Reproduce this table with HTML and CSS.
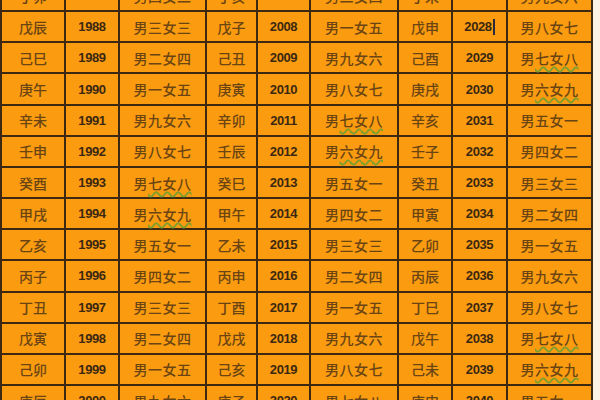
FILE: index.html
```html
<!DOCTYPE html>
<html lang="zh">
<head>
<meta charset="utf-8">
<link rel="stylesheet" href="styles.css">
</head>
<body>
<div class="sheet">
  <div class="c gz">丁卯</div><div class="c yr">1987</div><div class="c mf">男四女二</div>
  <div class="c gz">丁亥</div><div class="c yr">2007</div><div class="c mf">男二女四</div>
  <div class="c gz">丁未</div><div class="c yr">2027</div><div class="c mf">男九女六</div>

  <div class="c gz">戊辰</div><div class="c yr">1988</div><div class="c mf">男三女三</div>
  <div class="c gz">戊子</div><div class="c yr">2008</div><div class="c mf">男一女五</div>
  <div class="c gz">戊申</div><div class="c yr">2028<span class="caret"></span></div><div class="c mf">男八女七</div>

  <div class="c gz">己巳</div><div class="c yr">1989</div><div class="c mf">男二女四</div>
  <div class="c gz">己丑</div><div class="c yr">2009</div><div class="c mf">男九女六</div>
  <div class="c gz">己酉</div><div class="c yr">2029</div><div class="c mf">男<span class="sp">七女八</span></div>

  <div class="c gz">庚午</div><div class="c yr">1990</div><div class="c mf">男一女五</div>
  <div class="c gz">庚寅</div><div class="c yr">2010</div><div class="c mf">男八女七</div>
  <div class="c gz">庚戌</div><div class="c yr">2030</div><div class="c mf">男<span class="sp">六女九</span></div>

  <div class="c gz">辛未</div><div class="c yr">1991</div><div class="c mf">男九女六</div>
  <div class="c gz">辛卯</div><div class="c yr">2011</div><div class="c mf">男<span class="sp">七女八</span></div>
  <div class="c gz">辛亥</div><div class="c yr">2031</div><div class="c mf">男五女一</div>

  <div class="c gz">壬申</div><div class="c yr">1992</div><div class="c mf">男八女七</div>
  <div class="c gz">壬辰</div><div class="c yr">2012</div><div class="c mf">男<span class="sp">六女九</span></div>
  <div class="c gz">壬子</div><div class="c yr">2032</div><div class="c mf">男四女二</div>

  <div class="c gz">癸酉</div><div class="c yr">1993</div><div class="c mf">男<span class="sp">七女八</span></div>
  <div class="c gz">癸巳</div><div class="c yr">2013</div><div class="c mf">男五女一</div>
  <div class="c gz">癸丑</div><div class="c yr">2033</div><div class="c mf">男三女三</div>

  <div class="c gz">甲戌</div><div class="c yr">1994</div><div class="c mf">男<span class="sp">六女九</span></div>
  <div class="c gz">甲午</div><div class="c yr">2014</div><div class="c mf">男四女二</div>
  <div class="c gz">甲寅</div><div class="c yr">2034</div><div class="c mf">男二女四</div>

  <div class="c gz">乙亥</div><div class="c yr">1995</div><div class="c mf">男五女一</div>
  <div class="c gz">乙未</div><div class="c yr">2015</div><div class="c mf">男三女三</div>
  <div class="c gz">乙卯</div><div class="c yr">2035</div><div class="c mf">男一女五</div>

  <div class="c gz">丙子</div><div class="c yr">1996</div><div class="c mf">男四女二</div>
  <div class="c gz">丙申</div><div class="c yr">2016</div><div class="c mf">男二女四</div>
  <div class="c gz">丙辰</div><div class="c yr">2036</div><div class="c mf">男九女六</div>

  <div class="c gz">丁丑</div><div class="c yr">1997</div><div class="c mf">男三女三</div>
  <div class="c gz">丁酉</div><div class="c yr">2017</div><div class="c mf">男一女五</div>
  <div class="c gz">丁巳</div><div class="c yr">2037</div><div class="c mf">男八女七</div>

  <div class="c gz">戊寅</div><div class="c yr">1998</div><div class="c mf">男二女四</div>
  <div class="c gz">戊戌</div><div class="c yr">2018</div><div class="c mf">男九女六</div>
  <div class="c gz">戊午</div><div class="c yr">2038</div><div class="c mf">男<span class="sp">七女八</span></div>

  <div class="c gz">己卯</div><div class="c yr">1999</div><div class="c mf">男一女五</div>
  <div class="c gz">己亥</div><div class="c yr">2019</div><div class="c mf">男八女七</div>
  <div class="c gz">己未</div><div class="c yr">2039</div><div class="c mf">男<span class="sp">六女九</span></div>

  <div class="c gz">庚辰</div><div class="c yr">2000</div><div class="c mf">男九女六</div>
  <div class="c gz">庚子</div><div class="c yr">2020</div><div class="c mf">男<span class="sp">七女八</span></div>
  <div class="c gz">庚申</div><div class="c yr">2040</div><div class="c mf">男五女一</div>
</div>
</body>
</html>
```

FILE: styles.css
```css
html, body {
  margin: 0;
  padding: 0;
  background: #fbf3e6;
  overflow: hidden;
}
.sheet {
  width: 589px;
  margin-top: -19px;
  padding: 0 2px 2px 2px;
  background: #3d2812;
  display: grid;
  grid-template-columns: 62px 52px 85px 49px 51px 86px 52px 53px 83px;
  grid-auto-rows: 29.17px;
  gap: 2px;
}
.c {
  background: #fb9b10;
  display: flex;
  align-items: center;
  justify-content: center;
  white-space: nowrap;
}
.gz, .mf {
  font-family: "Noto Sans CJK SC", "Noto Sans", sans-serif;
  font-size: 14px;
  color: #6a4513;
  font-weight: 500;
}
.mf {
  letter-spacing: 0.5px;
}
.yr {
  font-family: "Liberation Sans", Arial, sans-serif;
  font-weight: bold;
  font-size: 13px;
  color: #3b2812;
  letter-spacing: -0.4px;
}
.sp {
  text-decoration-line: underline;
  text-decoration-style: wavy;
  text-decoration-color: #7f9e2c;
  text-decoration-thickness: 1.5px;
  text-decoration-skip-ink: none;
  text-underline-offset: 2px;
}
.caret {
  display: inline-block;
  width: 2px;
  height: 16px;
  margin-left: 1px;
  background: #2a2a3a;
}
```
